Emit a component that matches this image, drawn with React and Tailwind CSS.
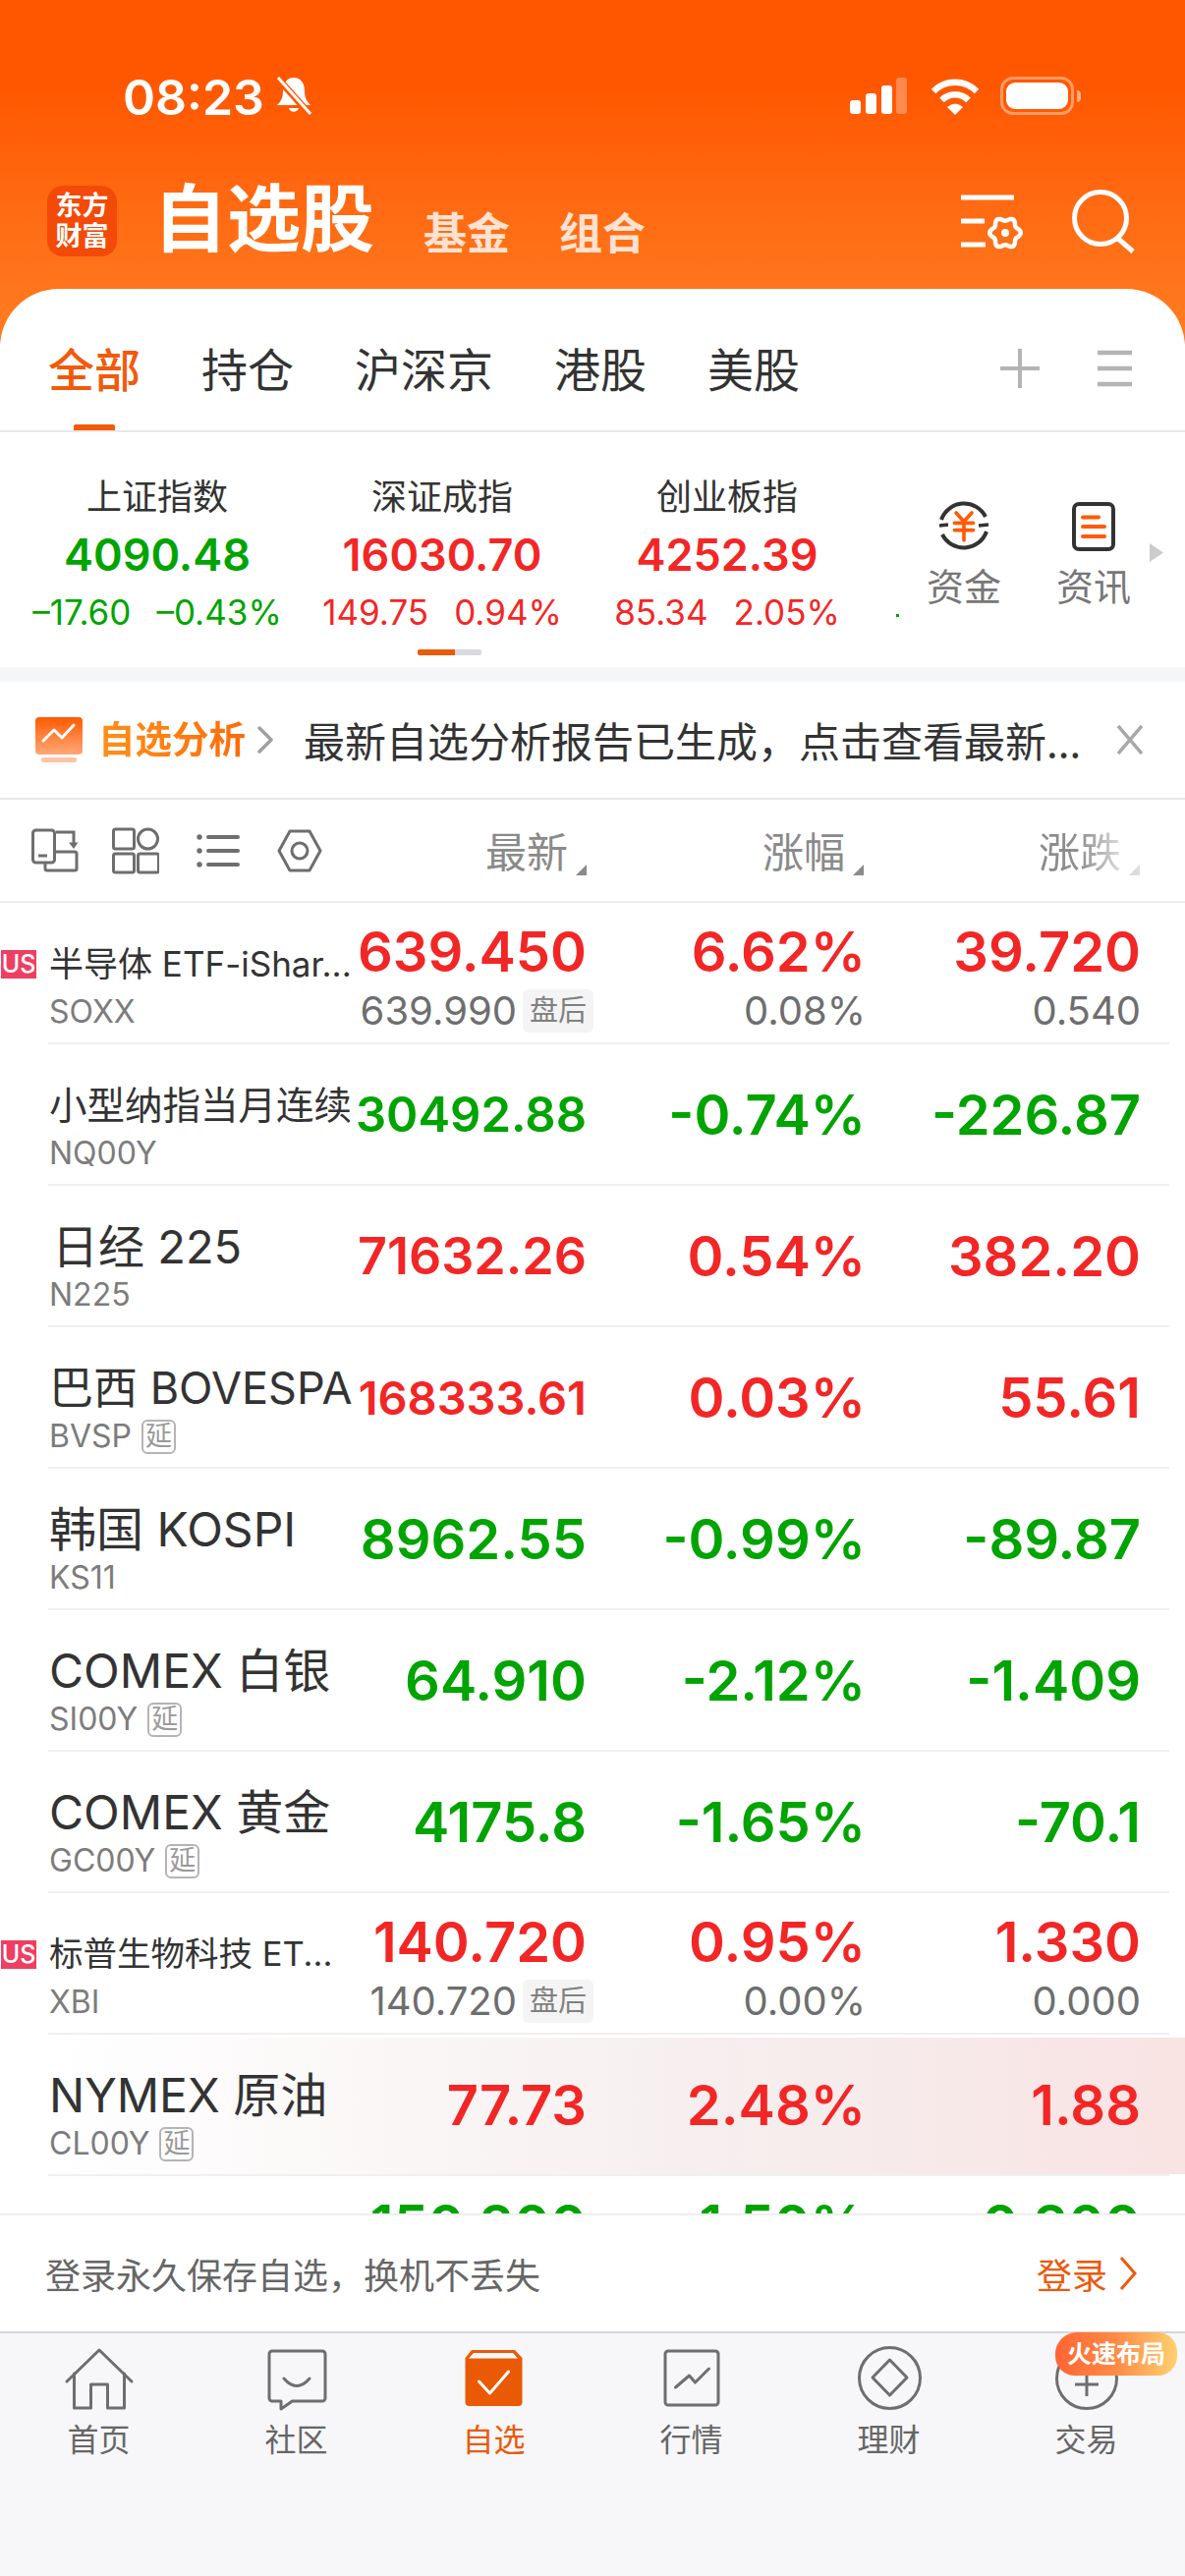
import React from 'react';

const RED = 'text-[#f32626]';
const GREEN = 'text-[#00a400]';
const CN_COMMA = '\uFF0C';

const STOCKS = [
    { name: '半导体 ETF-iShar...', nameCls: 'text-[35px]', symbol: 'SOXX', us: true, color: RED, cells: [['639.450', '639.990'], ['6.62%', '0.08%'], ['39.720', '0.540']], tag: '盘后' },
    { name: '小型纳指当月连续', nameCls: 'text-[38.500px]', symbol: 'NQ00Y', color: GREEN, valueCls: 'text-[49px]', cells: [['30492.88'], ['-0.74%'], ['-226.87']] },
    { name: '日经 225', nameCls: 'text-[47px] pl-[3px]', symbol: 'N225', color: RED, valueCls: 'text-[52px]', cells: [['71632.26'], ['0.54%'], ['382.20']] },
    { name: '巴西 BOVESPA', nameCls: 'text-[45px]', symbol: 'BVSP', delay: true, color: RED, valueCls: 'text-[47px]', cells: [['168333.61'], ['0.03%'], ['55.61']] },
    { name: '韩国 KOSPI', nameCls: 'text-[48px]', symbol: 'KS11', color: GREEN, cells: [['8962.55'], ['-0.99%'], ['-89.87']] },
    { name: 'COMEX 白银', nameCls: 'text-[48px]', symbol: 'SI00Y', delay: true, color: GREEN, cells: [['64.910'], ['-2.12%'], ['-1.409']] },
    { name: 'COMEX 黄金', nameCls: 'text-[48px]', symbol: 'GC00Y', delay: true, color: GREEN, cells: [['4175.8'], ['-1.65%'], ['-70.1']] },
    { name: '标普生物科技 ET...', nameCls: 'text-[34.500px]', symbol: 'XBI', us: true, color: RED, cells: [['140.720', '140.720'], ['0.95%', '0.00%'], ['1.330', '0.000']], tag: '盘后' },
    { name: 'NYMEX 原油', nameCls: 'text-[48px]', symbol: 'CL00Y', delay: true, hot: true, color: RED, cells: [['77.73'], ['2.48%'], ['1.88']] },
    { name: '', nameCls: 'text-[35px]', symbol: '', color: GREEN, cells: [['150.300', ' '], ['-1.50%', ' '], ['-0.300', ' ']] },
];

const INDEXES = [
    { name: '上证指数', value: '4090.48', a: '–17.60', b: '–0.43%', color: GREEN },
    { name: '深证成指', value: '16030.70', a: '149.75', b: '0.94%', color: RED },
    { name: '创业板指', value: '4252.39', a: '85.34', b: '2.05%', color: RED },
];

// wavy outline for the little gear in the header
const gearPath = () => {
    const pts = [];
    for (let i = 0; i < 72; i++) {
        const t = (i / 72) * Math.PI * 2;
        const r = 14 + 1.8 * Math.cos(6 * t);
        pts.push(`${(47 + r * Math.cos(t)).toFixed(2)} ${(43 + r * Math.sin(t)).toFixed(2)}`);
    }
    return `M${pts.join(' L')} Z`;
};

const StatusBar = () => (
    <div className="flex h-[185px] items-start pl-[125px] pr-[106px] pt-[76px] text-white">
        <span className="text-[50px] leading-[46px] font-semibold">08:23</span>
        <svg className="ml-[10px] mt-[1px]" width="40" height="42" viewBox="0 0 40 42">
            <path d="M20 2c-7 0-11 6-11 13 0 8-2 11-6 15h34c-4-4-6-7-6-15 0-7-4-13-11-13Z" fill="#fff" />
            <path d="M15 33a5.2 5.2 0 0 0 10 0Z" fill="#fff" />
            <path d="M4 3l33 37" stroke="#ff5800" strokeWidth="7" />
            <path d="M4 2l33 37" stroke="#fff" strokeWidth="3" />
        </svg>
        <div className="ml-auto flex items-start">
            <svg width="58" height="38" viewBox="0 0 58 38" className="mt-[3px]">
                <rect x="0" y="23" width="11" height="14" rx="3" fill="#fff" />
                <rect x="16" y="16" width="11" height="21" rx="3" fill="#fff" />
                <rect x="32" y="8" width="11" height="29" rx="3" fill="#fff" />
                <rect x="47" y="0" width="11" height="37" rx="3" fill="#fff" fillOpacity="0.3" />
            </svg>
            <svg width="48" height="38" viewBox="0 0 48 38" className="ml-[25px] mt-[3px]">
                <path d="M2 14A31 31 0 0 1 46 14" fill="none" stroke="#fff" strokeWidth="6.5" />
                <path d="M10.500 23A19 19 0 0 1 37.500 23" fill="none" stroke="#fff" strokeWidth="6.5" />
                <path d="M16 30Q24 23 32 30L24 38Z" fill="#fff" />
            </svg>
            <div className="ml-[22px] mt-[2px] flex items-center">
                <div className="flex h-[39px] w-[75px] items-center justify-center rounded-[13px] border-[3px] border-white/40">
                    <div className="h-[27px] w-[63px] rounded-[9px] bg-white" />
                </div>
                <div className="ml-[3px] h-[12px] w-[4px] rounded-r-full bg-white/50" />
            </div>
        </div>
    </div>
);

const TitleBar = () => (
    <div className="flex items-end pl-[48px] pr-[50px] text-white">
        <div className="flex h-[72px] w-[71px] flex-col items-center justify-center rounded-[16px] bg-[#f34a08] text-[27px] leading-[31px] font-bold">
            <span>东方</span>
            <span>财富</span>
        </div>
        <span className="ml-[37px] text-[75px] leading-[76px] font-bold">自选股</span>
        <span className="ml-[50px] text-[44px] leading-[46px] font-bold text-white/80">基金</span>
        <span className="ml-[50px] text-[44px] leading-[46px] font-bold text-white/80">组合</span>
        <div className="ml-auto flex items-center">
            <svg width="70" height="62" viewBox="0 0 70 62" fill="none" stroke="#fff">
                <path d="M2 7H56M2 31H26M2 55H27" strokeWidth="5" />
                <path d={gearPath()} strokeWidth="4.500" />
                <circle cx="47" cy="43" r="4" fill="#fff" stroke="none" />
            </svg>
            <svg className="ml-[40px]" width="70" height="72" viewBox="0 0 70 72" fill="none" stroke="#fff" strokeWidth="5">
                <circle cx="34" cy="33" r="26.500" />
                <path d="M52 54l15 13" />
            </svg>
        </div>
    </div>
);

const Tabs = () => (
    <div className="flex h-[146px] items-start border-b-2 border-[#e8e8e8] pl-[49px] pr-[54px] pt-[55px] text-[47px] leading-[56px] text-[#333]">
        <div className="relative mr-[62px] font-medium text-[#f25a0a]">
            全部
            <div className="absolute left-[26px] top-[83px] h-[6px] w-[42px] rounded-t-[2px] bg-[#f25a0a]" />
        </div>
        <span className="mr-[62px]">持仓</span>
        <span className="mr-[62px]">沪深京</span>
        <span className="mr-[62px]">港股</span>
        <span>美股</span>
        <div className="ml-auto flex items-center pt-[6px]">
            <svg width="40" height="40" viewBox="0 0 40 40" stroke="#b4b4b4" strokeWidth="4">
                <path d="M0 20H40M20 0V40" />
            </svg>
            <svg className="ml-[59px]" width="35" height="38" viewBox="0 0 35 38" stroke="#b4b4b4" strokeWidth="4.500">
                <path d="M0 3H35M0 19H35M0 35H35" />
            </svg>
        </div>
    </div>
);

const IndexStrip = () => (
    <div className="h-[239px] bg-white">
        <div className="flex h-[221px] items-start pl-[15px]">
            {INDEXES.map((x) => (
                <div key={x.name} className="flex w-[290px] flex-col items-center pt-[44px]">
                    <span className="text-[36px] leading-[44px] text-[#333]">{x.name}</span>
                    <span className={`mt-[9px] text-[45px] leading-[56px] font-semibold ${x.color}`}>{x.value}</span>
                    <div className={`mt-[10px] flex gap-[26px] text-[35px] leading-[40px] whitespace-nowrap ${x.color}`}>
                        <span>{x.a}</span>
                        <span>{x.b}</span>
                    </div>
                </div>
            ))}
            <div className="ml-[27px] mt-[185px] h-[3px] w-[3px] bg-[#00a400]" />
            <div className="ml-[16px] flex w-[100px] flex-col items-center pt-[65px]">
                <svg width="60" height="60" viewBox="0 0 60 60" fill="none">
                    <path d="M7 24A24.500 24.500 0 0 1 52 21M53 36A24.500 24.500 0 0 1 8 39" stroke="#333" strokeWidth="4" />
                    <path d="M5 30l9-1M45 30l10-1" stroke="#333" strokeWidth="3.500" />
                    <path d="M20 15l10 11 10-11M18 28H42M18 37H42M30 26V50" stroke="#ff5a00" strokeWidth="4.500" strokeLinecap="round" transform="translate(6 5) scale(0.8)" />
                </svg>
                <span className="mt-[10px] text-[38px] leading-[44px] text-[#777]">资金</span>
            </div>
            <div className="ml-[32px] flex w-[100px] flex-col items-center pt-[65px]">
                <svg width="60" height="60" viewBox="0 0 60 60" fill="none">
                    <rect x="10" y="8" width="40" height="46" rx="5" stroke="#333" strokeWidth="4" />
                    <path d="M19 21.500H35M19 31H41M19 41H41" stroke="#ff5a00" strokeWidth="4" strokeLinecap="round" />
                </svg>
                <span className="mt-[10px] text-[38px] leading-[44px] text-[#777]">资讯</span>
            </div>
            <svg className="ml-[7px] mt-[113px]" width="14" height="19" viewBox="0 0 14 19">
                <path d="M0 0L14 9.500L0 19Z" fill="#ccc" />
            </svg>
        </div>
        <div className="ml-[425px] flex h-[6px] w-[65px] overflow-hidden rounded-[2px] bg-[#d8dade]">
            <div className="h-full w-[38px] bg-[#ea5a0c]" />
        </div>
    </div>
);

const AnalysisBar = () => (
    <div className="flex h-[120px] items-center border-b-2 border-[#e8e8e8] bg-white">
        <svg className="ml-[35px]" width="50" height="46" viewBox="0 0 50 46">
            <defs>
                <linearGradient id="tv" x1="0" y1="0" x2="0" y2="1">
                    <stop offset="0" stopColor="#ff5a00" />
                    <stop offset="1" stopColor="#ffa878" />
                </linearGradient>
            </defs>
            <rect x="1" y="0" width="48" height="38" rx="4" fill="url(#tv)" />
            <rect x="7" y="41" width="36" height="5" rx="2" fill="#ffc3a5" />
            <path d="M9 24l11-11 8 8 12-13" fill="none" stroke="#fff" strokeWidth="3" strokeLinecap="round" strokeLinejoin="round" />
        </svg>
        <span className="ml-[15px] bg-gradient-to-r from-[#ff9018] to-[#ff6a0a] bg-clip-text text-[37.500px] leading-[44px] font-bold text-transparent">自选分析</span>
        <svg className="ml-[12px]" width="16" height="28" viewBox="0 0 16 28" fill="none" stroke="#a0a0a0" strokeWidth="3.500" strokeLinecap="round" strokeLinejoin="round">
            <path d="M2 2l12 12L2 26" />
        </svg>
        <span className="ml-[31px] text-[42px] leading-[52px] whitespace-nowrap text-[#333] font-['Noto_Sans_CJK_SC',sans-serif]">最新自选分析报告已生成{CN_COMMA}点击查看最新...</span>
        <svg className="ml-auto mr-[43px]" width="26" height="30" viewBox="0 0 26 30" stroke="#a8a8a8" strokeWidth="3.500">
            <path d="M1 1l24 28M25 1L1 29" />
        </svg>
    </div>
);

const SortMark = ({ light }) => (
    <svg className="mb-[2px] ml-[8px] self-end" width="11" height="11" viewBox="0 0 11 11">
        <path d="M11 0V11H0Z" fill={light ? '#dcdcdc' : '#8a8a8a'} />
    </svg>
);

const ListHeader = () => (
    <div className="flex h-[105px] items-center border-b-2 border-[#eeeeee] bg-white text-[42px] leading-[50px] text-[#8a8a8a]">
        <div className="flex w-[597px] items-center pl-[32px]">
            <svg width="48" height="46" viewBox="0 0 48 46" fill="none" stroke="#6e6e6e" strokeWidth="3">
                <rect x="1.500" y="2" width="22" height="33" rx="3" />
                <path d="M7 28H16" />
                <path d="M23.500 24H44a2 2 0 0 1 2 2V41a2 2 0 0 1-2 2H16a2 2 0 0 1-2-2V35" />
                <path d="M25 4H43V17" />
                <path d="M38 14.500L43 21 47.500 14.500Z" fill="#6e6e6e" stroke="none" />
            </svg>
            <svg className="ml-[34px]" width="48" height="48" viewBox="0 0 48 48" fill="none" stroke="#6e6e6e" strokeWidth="3">
                <rect x="1.500" y="2" width="21" height="20" rx="2" />
                <circle cx="36.500" cy="12" r="10" />
                <rect x="1.500" y="27" width="21" height="19" rx="2" />
                <rect x="26.500" y="27" width="21" height="19" rx="2" />
            </svg>
            <svg className="ml-[38px]" width="44" height="34" viewBox="0 0 44 34" fill="#6e6e6e">
                <circle cx="3" cy="3" r="2.700" />
                <circle cx="3" cy="17" r="2.700" />
                <circle cx="3" cy="31" r="2.700" />
                <rect x="10" y="1" width="34" height="4" rx="2" />
                <rect x="10" y="15" width="34" height="4" rx="2" />
                <rect x="10" y="29" width="34" height="4" rx="2" />
            </svg>
            <svg className="ml-[38px]" width="46" height="44" viewBox="0 0 46 44" fill="none" stroke="#6e6e6e" strokeWidth="3">
                <path d="M2 22L13 2H33L44 22 33 42H13Z" strokeLinejoin="round" />
                <circle cx="23" cy="22" r="8" />
            </svg>
            <span className="ml-auto mt-[4px]">最新</span>
            <SortMark />
        </div>
        <div className="flex w-[282px] items-center justify-end">
            <span className="mt-[4px]">涨幅</span>
            <SortMark />
        </div>
        <div className="flex w-[281px] items-center justify-end">
            <span className="mt-[4px] bg-gradient-to-r from-[#8a8a8a] via-[#8f8f8f] to-[#dedede] bg-clip-text text-transparent">涨跌</span>
            <SortMark light />
        </div>
    </div>
);

const NumCell = ({ width, main, sub, tag, color, mainCls }) => (
    <div className={`flex flex-col items-end ${width} ${sub ? 'pt-[20px]' : 'justify-center pt-[1px]'}`}>
        <span className={`leading-[60px] font-semibold whitespace-nowrap ${mainCls} ${color}`}>{main}</span>
        {sub && (
            <div className="mt-[8px] flex h-[44px] items-center text-[40px] leading-[44px] text-[#6e6e6e]">
                <span>{sub}</span>
                {tag && (
                    <span className="-mr-[7px] ml-[6px] flex h-[44px] w-[72px] items-center justify-center rounded-[6px] bg-[#f4f4f4] text-[29px] text-[#808080]">{tag}</span>
                )}
            </div>
        )}
    </div>
);

const StockRow = ({ item }) => (
    <div className="relative flex h-[144px] pl-[49px] pr-[16px]">
        {item.hot && <div className="absolute bottom-[2px] left-[49px] right-0 top-[3px] bg-gradient-to-r from-white via-[#f6eeee] via-[60%] to-[#f9e3e3]" />}
        {item.us && (
            <div className="absolute left-[1px] top-[48px] flex h-[29px] w-[36px] items-center justify-center bg-[#ee3f63] text-[25px] leading-[29px] font-medium text-white">US</div>
        )}
        <div className="relative flex flex-1 border-b-2 border-[#f0f0f0]">
            <div className="w-[312px] pl-[1px] pt-[36px]">
                <div className={`h-[52px] leading-[52px] whitespace-nowrap text-[#333] ${item.nameCls}`}>{item.name}</div>
                <div className="mt-[3px] flex h-[40px] items-center text-[32px] leading-[40px] text-[#7c7c7c]">
                    <span>{item.symbol}</span>
                    {item.delay && (
                        <span className="ml-[10px] flex h-[35px] w-[35px] items-center justify-center rounded-[6px] border-2 border-[#b4b4b4] text-[27px] text-[#9a9a9a]">延</span>
                    )}
                </div>
            </div>
            <NumCell width="w-[236px]" main={item.cells[0][0]} sub={item.cells[0][1]} tag={item.tag} color={item.color} mainCls={item.valueCls || 'text-[56px]'} />
            <NumCell width="w-[284px]" main={item.cells[1][0]} sub={item.cells[1][1]} color={item.color} mainCls="text-[56px]" />
            <NumCell width="w-[280px]" main={item.cells[2][0]} sub={item.cells[2][1]} color={item.color} mainCls="text-[56px]" />
        </div>
    </div>
);

const LoginBar = () => (
    <div className="flex h-[120px] shrink-0 items-center border-t-2 border-[#eeeeee] bg-white pl-[46px] pr-[48px] text-[36px] leading-[44px] font-['Noto_Sans_CJK_SC',sans-serif]">
        <span className="text-[#666]">登录永久保存自选{CN_COMMA}换机不丢失</span>
        <span className="ml-auto text-[#ea5a0c]">登录</span>
        <svg className="ml-[11px]" width="20" height="34" viewBox="0 0 20 34" fill="none" stroke="#ea5a0c" strokeWidth="3">
            <path d="M3 1l14 16L3 33" />
        </svg>
    </div>
);

const HomeIcon = () => (
    <g stroke="#6e6e6e" strokeWidth="3" fill="none" strokeLinecap="round" strokeLinejoin="round">
        <path d="M3 36L36 4l33 32" />
        <path d="M10.500 28V63H27.500V39H44.500V63H61.500V28" />
    </g>
);
const ChatIcon = () => (
    <g stroke="#6e6e6e" strokeWidth="3" fill="none" strokeLinejoin="round">
        <path d="M11 5H62a3 3 0 0 1 3 3V53a3 3 0 0 1-3 3H31.500L20 64V56H11a3 3 0 0 1-3-3V8a3 3 0 0 1 3-3Z" />
        <path d="M23 33Q36 48 49 33" strokeLinecap="round" />
    </g>
);
const WatchIcon = () => (
    <g>
        <path d="M13 4H57L64.500 12V57a4 4 0 0 1-4 4H10.500a4 4 0 0 1-4-4V12Z" fill="#ea5a05" />
        <path d="M15 7H55L60 12.500H10Z" fill="#f7f7f9" />
        <path d="M20.500 36L31.500 48 50.500 26" fill="none" stroke="#fff" strokeWidth="3" strokeLinecap="round" strokeLinejoin="round" />
    </g>
);
const MarketIcon = () => (
    <g stroke="#6e6e6e" strokeWidth="3" fill="none" strokeLinejoin="round" strokeLinecap="round">
        <rect x="9" y="5" width="54" height="55" rx="3" />
        <path d="M19.500 42L33.500 30l6 7 14-14" />
    </g>
);
const WealthIcon = () => (
    <g stroke="#6e6e6e" strokeWidth="3" fill="none" strokeLinejoin="round">
        <circle cx="36.500" cy="32.500" r="31" />
        <path d="M36.500 14L54 32 36.500 50 19 32Z" />
    </g>
);
const TradeIcon = () => (
    <g stroke="#6e6e6e" strokeWidth="3" fill="none">
        <circle cx="36" cy="33" r="30.500" />
        <path d="M24 39H48M36 25V51" />
    </g>
);

const TABS = [
    { label: '首页', icon: <HomeIcon /> },
    { label: '社区', icon: <ChatIcon /> },
    { label: '自选', icon: <WatchIcon />, active: true },
    { label: '行情', icon: <MarketIcon /> },
    { label: '理财', icon: <WealthIcon /> },
    { label: '交易', icon: <TradeIcon /> },
];

const TabBar = () => (
    <div className="relative grid h-[249px] shrink-0 grid-cols-6 border-t-2 border-[#d6d6da] bg-[#f7f7f9] pt-[13px]">
        {TABS.map((t) => (
            <div key={t.label} className="flex flex-col items-center">
                <svg width="72" height="68" viewBox="0 0 72 68">{t.icon}</svg>
                <span className={`mt-[8px] text-[32px] leading-[40px] ${t.active ? 'text-[#ea5a0c]' : 'text-[#666]'}`}>{t.label}</span>
            </div>
        ))}
        {/* promo badge sits on top of the last tab */}
        <div className="absolute -top-[1px] left-[1074px] flex h-[44px] w-[124px] items-center justify-center rounded-[20px] rounded-tl-[22px] bg-gradient-to-r from-[#ff6433] via-[#ff8a45] to-[#ffd070] text-[25px] leading-[30px] font-bold text-white">
            火速布局
        </div>
    </div>
);

export default function App() {
    return (
        <div className="flex h-[2622px] w-[1206px] flex-col overflow-hidden bg-white font-['Inter','Noto_Sans_CJK_SC',sans-serif]">
            <div className="h-[350px] shrink-0 bg-gradient-to-b from-[#ff5700] from-[25%] to-[#ff7d20]">
                <StatusBar />
                <TitleBar />
            </div>
            <div className="relative -mt-[56px] flex min-h-0 flex-1 flex-col rounded-t-[60px] bg-white">
                <Tabs />
                <IndexStrip />
                <div className="h-[15px] shrink-0 bg-[#f5f6f8]" />
                <AnalysisBar />
                <ListHeader />
                <div className="min-h-0 flex-1 overflow-hidden">
                    {STOCKS.map((s) => (
                        <StockRow key={s.symbol || 'last'} item={s} />
                    ))}
                </div>
                <LoginBar />
                <TabBar />
            </div>
        </div>
    );
}
